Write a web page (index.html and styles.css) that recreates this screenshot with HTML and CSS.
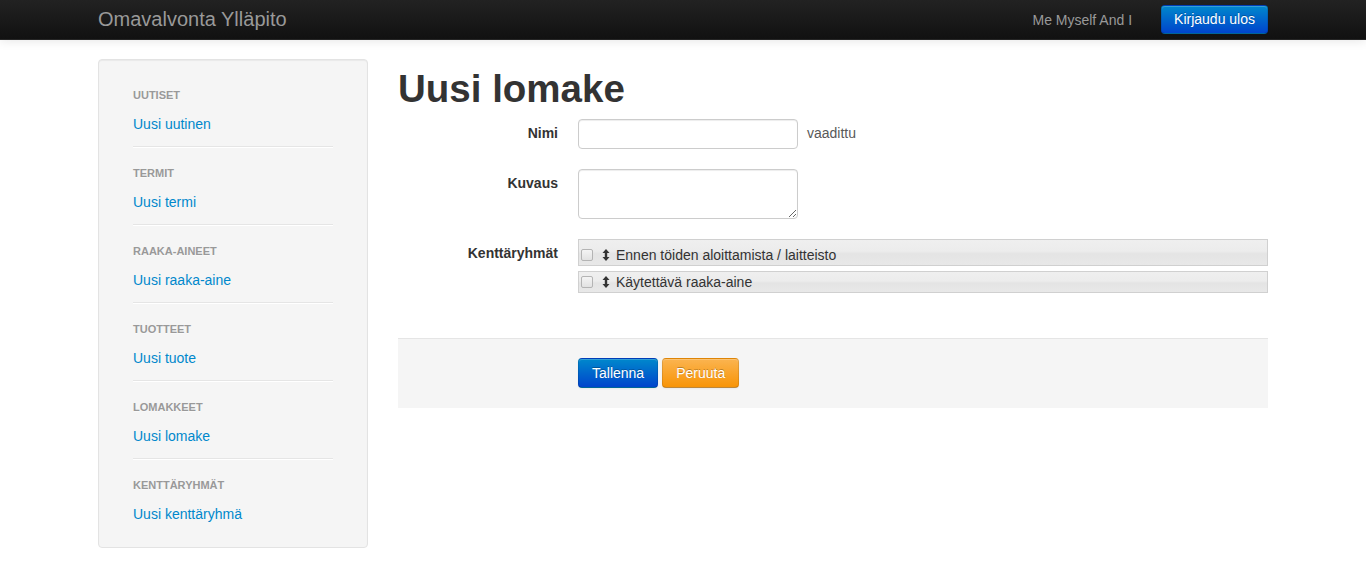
FILE: index.html
```html
<!DOCTYPE html>
<html lang="fi">
<head>
<meta charset="utf-8">
<title>Omavalvonta Ylläpito</title>
<link rel="stylesheet" href="styles.css">
</head>
<body>
<header class="navbar">
  <div class="container navbar-inner">
    <a class="brand" href="#">Omavalvonta Ylläpito</a>
    <div class="navbar-right">
      <span class="navbar-text">Me Myself And I</span>
      <a class="btn btn-primary btn-nav" href="#">Kirjaudu ulos</a>
    </div>
  </div>
</header>

<div class="container layout">
  <aside class="well">
    <ul class="nav-list">
      <li class="nav-header">Uutiset</li>
      <li class="nav-link"><a href="#">Uusi uutinen</a></li>
      <li class="divider"></li>
      <li class="nav-header">Termit</li>
      <li class="nav-link"><a href="#">Uusi termi</a></li>
      <li class="divider"></li>
      <li class="nav-header">Raaka-aineet</li>
      <li class="nav-link"><a href="#">Uusi raaka-aine</a></li>
      <li class="divider"></li>
      <li class="nav-header">Tuotteet</li>
      <li class="nav-link"><a href="#">Uusi tuote</a></li>
      <li class="divider"></li>
      <li class="nav-header">Lomakkeet</li>
      <li class="nav-link"><a href="#">Uusi lomake</a></li>
      <li class="divider"></li>
      <li class="nav-header">Kenttäryhmät</li>
      <li class="nav-link"><a href="#">Uusi kenttäryhmä</a></li>
    </ul>
  </aside>

  <main class="main">
    <h1 class="title">Uusi lomake</h1>
    <form class="form-horizontal">
      <div class="control-group">
        <label class="control-label" for="nimi">Nimi</label>
        <div class="controls">
          <input id="nimi" class="input" type="text">
          <span class="help-inline">vaadittu</span>
        </div>
      </div>
      <div class="control-group">
        <label class="control-label" for="kuvaus">Kuvaus</label>
        <div class="controls">
          <textarea id="kuvaus" class="textarea"></textarea>
        </div>
      </div>
      <div class="control-group">
        <label class="control-label">Kenttäryhmät</label>
        <div class="controls">
          <ul class="sortable">
            <li class="sort-item sort-item-first">
              <input type="checkbox" class="check">
              <svg class="move-icon" width="8" height="12" viewBox="0 0 8 12"><path d="M4 0 L7.5 4 L5.2 4 L5.2 8 L7.5 8 L4 12 L0.5 8 L2.8 8 L2.8 4 L0.5 4 Z" fill="#333"/></svg>
              <span>Ennen töiden aloittamista / laitteisto</span>
            </li>
            <li class="sort-item">
              <input type="checkbox" class="check">
              <svg class="move-icon" width="8" height="12" viewBox="0 0 8 12"><path d="M4 0 L7.5 4 L5.2 4 L5.2 8 L7.5 8 L4 12 L0.5 8 L2.8 8 L2.8 4 L0.5 4 Z" fill="#333"/></svg>
              <span>Käytettävä raaka-aine</span>
            </li>
          </ul>
        </div>
      </div>
      <div class="form-actions">
        <button type="button" class="btn btn-primary">Tallenna</button>
        <button type="button" class="btn btn-warning">Peruuta</button>
      </div>
    </form>
  </main>
</div>
</body>
</html>
```

FILE: styles.css
```css
* { box-sizing: border-box; }

html, body {
  margin: 0;
  padding: 0;
}

body {
  font-family: "Liberation Sans", Arial, Helvetica, sans-serif;
  font-size: 14px;
  line-height: 20px;
  color: #333;
  background: #fff;
}

a { text-decoration: none; }

.container {
  width: 1170px;
  margin: 0 auto;
}

/* Navbar */
.navbar {
  height: 40px;
  background: linear-gradient(to bottom, #222222, #111111);
  border-bottom: 1px solid #252525;
  box-shadow: 0 1px 10px rgba(0, 0, 0, 0.1);
}

.navbar-inner {
  display: flex;
  align-items: center;
  justify-content: space-between;
  height: 40px;
}

.brand {
  font-size: 20px;
  line-height: 20px;
  color: #999;
  padding: 9px 0 11px;
}

.navbar-right {
  display: flex;
  align-items: center;
  gap: 29px;
}

.navbar-text {
  color: #999;
  font-size: 14px;
  line-height: 20px;
  margin-top: -1px;
}

/* Buttons */
.btn {
  display: inline-block;
  font-family: "Liberation Sans", Arial, sans-serif;
  font-size: 14px;
  line-height: 20px;
  padding: 4px 13px;
  border-radius: 4px;
  border: 1px solid rgba(0, 0, 0, 0.1);
  border-bottom-color: rgba(0, 0, 0, 0.25);
  color: #fff;
  text-shadow: 0 -1px 0 rgba(0, 0, 0, 0.25);
  box-shadow: inset 0 1px 0 rgba(255, 255, 255, 0.2), 0 1px 2px rgba(0, 0, 0, 0.05);
  cursor: pointer;
}

.btn-primary {
  background: linear-gradient(to bottom, #0088cc, #0044cc);
}

.btn-warning {
  background: linear-gradient(to bottom, #fbb450, #f89406);
}

.btn-nav {
  padding: 4px 12px;
  margin-top: -2px;
  height: 29px;
  line-height: 19px;
}

/* Layout */
.layout {
  display: flex;
  gap: 30px;
  padding-top: 19px;
  align-items: flex-start;
}

/* Sidebar */
.well {
  width: 270px;
  flex: none;
  background: #f5f5f5;
  border: 1px solid #e3e3e3;
  border-radius: 4px;
  box-shadow: inset 0 1px 1px rgba(0, 0, 0, 0.05);
  padding: 20px 19px 20px;
}

.nav-list {
  list-style: none;
  margin: 0;
  padding: 0 15px;
}

.nav-header {
  font-size: 11px;
  font-weight: bold;
  line-height: 20px;
  color: #999;
  text-transform: uppercase;
  text-shadow: 0 1px 0 rgba(255, 255, 255, 0.5);
  padding: 3px 0;
  margin-top: 2px;
}

.divider + .nav-header {
  margin-top: 12px;
}

.nav-link {
  margin-top: 3px;
  padding: 3px 0;
}

.nav-link a {
  color: #0088cc;
  font-size: 14px;
  line-height: 20px;
}

.divider {
  height: 2px;
  margin-top: 9px;
  background: #e5e5e5;
  border-bottom: 1px solid #fff;
}

/* Main */
.main {
  width: 870px;
  flex: none;
}

.title {
  font-size: 38.5px;
  line-height: 40px;
  font-weight: bold;
  color: #333;
  margin: 10px 0 10px;
  font-family: "Liberation Sans", Arial, sans-serif;
}

.form-horizontal {
  margin: 0;
}

.control-group {
  display: flex;
  margin-bottom: 20px;
}

.control-label {
  width: 160px;
  flex: none;
  text-align: right;
  font-weight: bold;
  padding-top: 4px;
  margin-right: 20px;
}

.controls {
  flex: 1;
  display: flex;
  align-items: flex-start;
}

.input,
.textarea {
  width: 220px;
  border: 1px solid #ccc;
  border-radius: 4px;
  box-shadow: inset 0 1px 1px rgba(0, 0, 0, 0.075);
  font-family: "Liberation Sans", Arial, sans-serif;
  font-size: 14px;
  padding: 4px 6px;
  background: #fff;
  margin: 0;
}

.input {
  height: 30px;
}

.textarea {
  height: 50px;
  resize: both;
  display: block;
}

.help-inline {
  color: #595959;
  padding-left: 9px;
  line-height: 28px;
}

.sortable {
  list-style: none;
  margin: 0;
  padding: 0;
  width: 100%;
  display: flex;
  flex-direction: column;
  gap: 5px;
}

.sort-item {
  display: flex;
  align-items: center;
  height: 22px;
  border: 1px solid #d0d0d0;
  background: linear-gradient(to bottom, #efefef 0%, #ececec 45%, #e4e4e4 55%, #e8e8e8 100%);
  color: #333;
  padding-left: 1px;
}

.sort-item-first {
  height: 27px;
  padding-top: 5px;
}

.check {
  appearance: none;
  -webkit-appearance: none;
  width: 12px;
  height: 12px;
  margin: 0 9px 0 1px;
  border: 1px solid #b4b4b4;
  border-radius: 2px;
  background: linear-gradient(to bottom, #f4f4f4, #e2e2e2);
  flex: none;
}

.move-icon {
  flex: none;
  margin-right: 6px;
}

.form-actions {
  margin-top: 45px;
  background: #f5f5f5;
  border-top: 1px solid #e5e5e5;
  padding: 19px 20px 20px 180px;
  display: flex;
  gap: 4px;
}
```
